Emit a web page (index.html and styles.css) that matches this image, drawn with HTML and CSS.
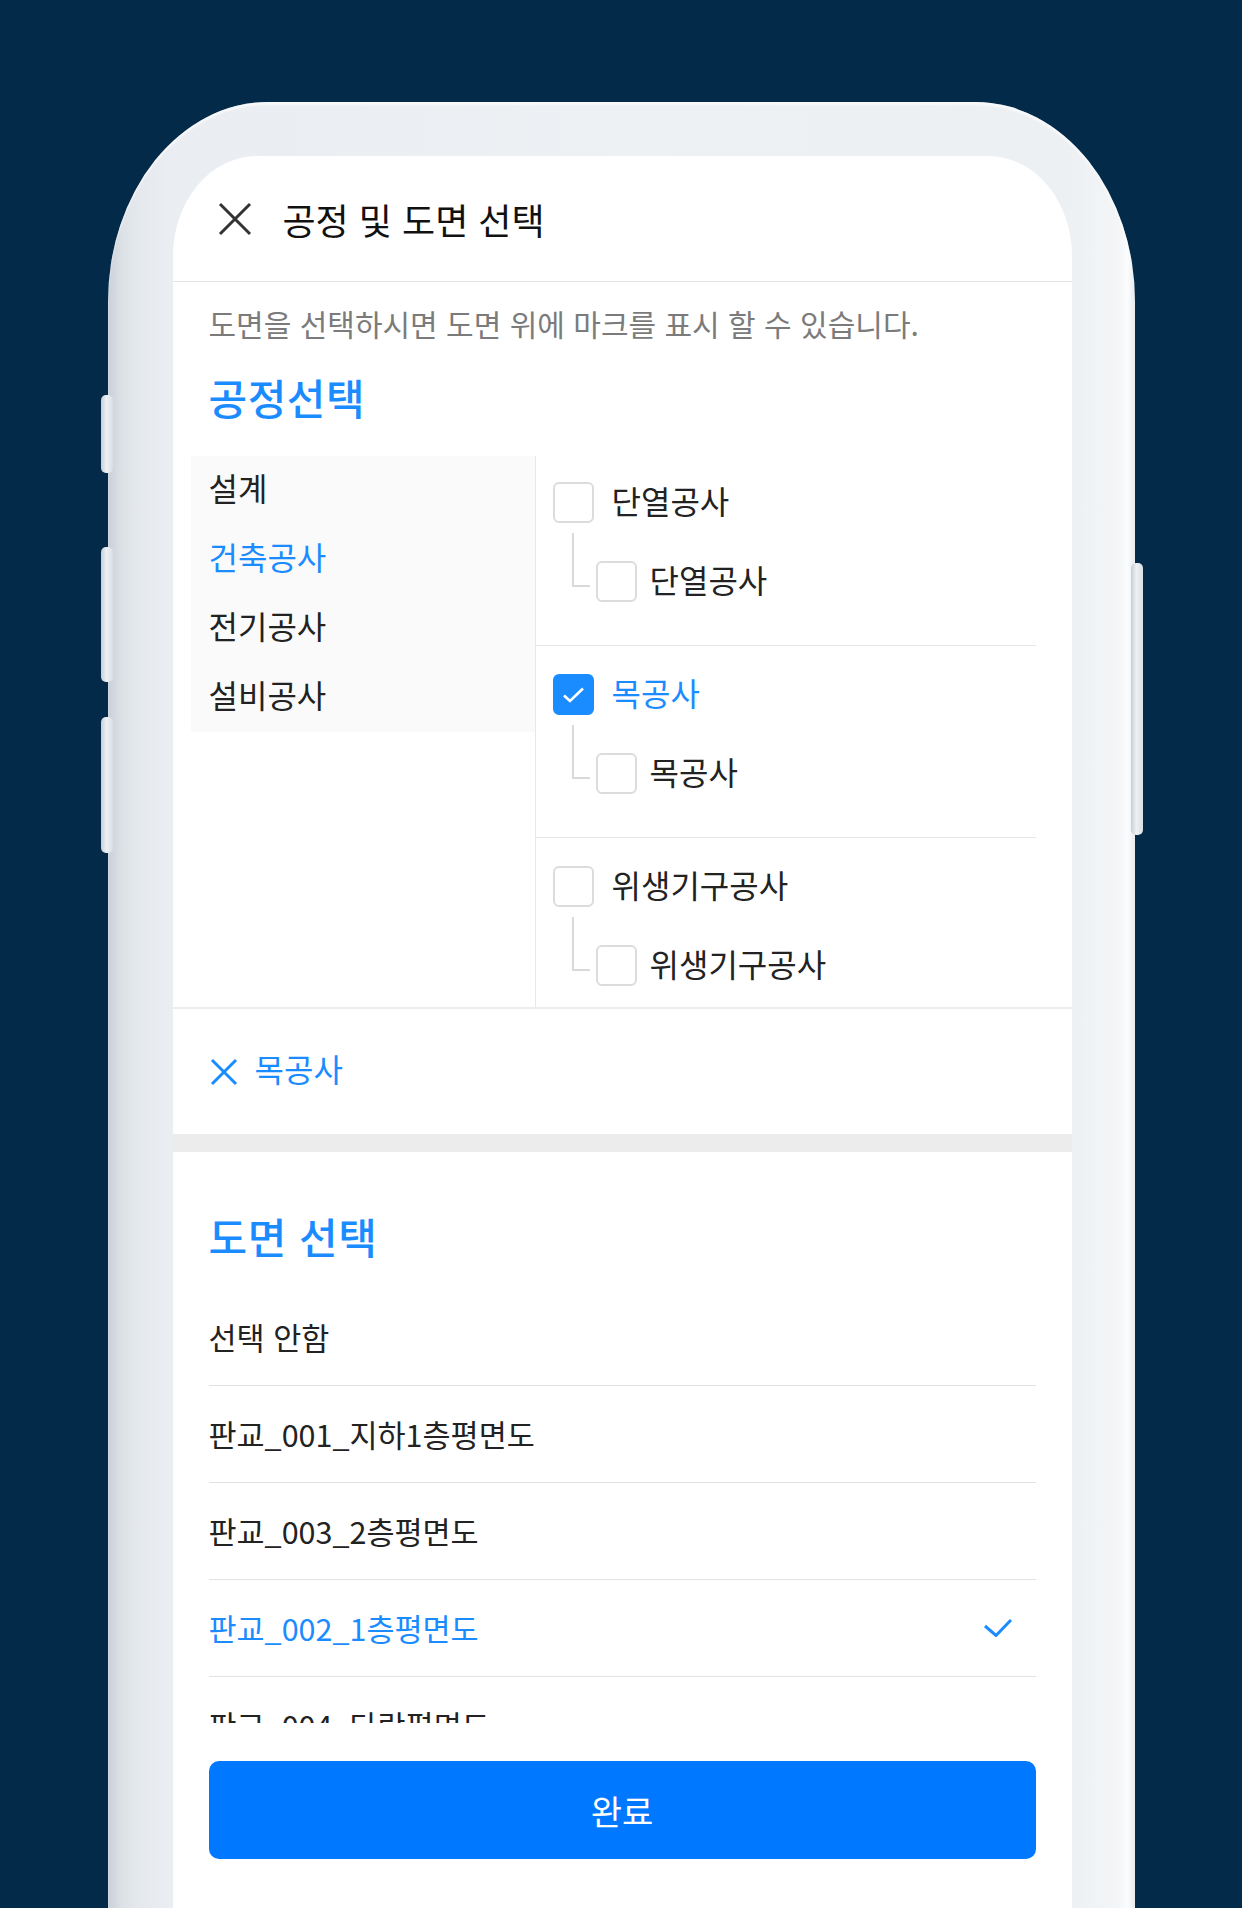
FILE: index.html
```html
<!DOCTYPE html>
<html lang="ko">
<head>
    <meta charset="UTF-8">
    <meta name="viewport" content="width=device-width, initial-scale=1.0">
    <title>공정 및 도면 선택</title>
<link rel="stylesheet" href="styles.css">
</head>
<body>
<div class="stage">
<div class="phone">
    <span class="side-btn mute"></span>
    <span class="side-btn vol-up"></span>
    <span class="side-btn vol-down"></span>
    <span class="side-btn power"></span>

    <div class="screen">
        <header class="top-bar">
            <svg class="close-icon" width="34" height="34" viewBox="0 0 34 34"><path d="M2 2L32 32M32 2L2 32" stroke="#333" stroke-width="3" fill="none"/></svg>
            <h1 class="top-title">공정 및 도면 선택</h1>
        </header>

        <div class="intro">
            <p class="hint">도면을 선택하시면 도면 위에 마크를 표시 할 수 있습니다.</p>
            <h2 class="section-title">공정선택</h2>
        </div>

        <div class="tree">
            <ul class="cats">
                <li>설계</li>
                <li class="active">건축공사</li>
                <li>전기공사</li>
                <li>설비공사</li>
            </ul>

            <div class="groups">
                <div class="group first">
                    <label class="row"><span class="box"></span><span class="txt">단열공사</span></label>
                    <label class="row sub"><span class="box"></span><span class="txt">단열공사</span></label>
                </div>
                <div class="group">
                    <label class="row on">
                        <span class="box checked"><svg width="21" height="16" viewBox="0 0 21 16"><polyline points="1,8.5 7,14 20,1.5" fill="none" stroke="#fff" stroke-width="2.6"/></svg></span>
                        <span class="txt">목공사</span>
                    </label>
                    <label class="row sub"><span class="box"></span><span class="txt">목공사</span></label>
                </div>
                <div class="group">
                    <label class="row"><span class="box"></span><span class="txt">위생기구공사</span></label>
                    <label class="row sub"><span class="box"></span><span class="txt">위생기구공사</span></label>
                </div>
            </div>
        </div>

        <div class="chips">
            <span class="chip">
                <svg width="28" height="28" viewBox="0 0 28 28"><path d="M2 2L26 26M26 2L2 26" stroke="#1b8cff" stroke-width="3" fill="none"/></svg>
                <span class="txt">목공사</span>
            </span>
        </div>

        <div class="gap-band"></div>

        <div class="drawings">
            <h2 class="section-title">도면 선택</h2>
            <ul class="draw-list">
                <li>선택 안함</li>
                <li>판교_001_지하1층평면도</li>
                <li>판교_003_2층평면도</li>
                <li class="on">판교_002_1층평면도
                    <svg width="28" height="18" viewBox="0 0 28 18"><polyline points="1,7 12,16.5 27,1" fill="none" stroke="#1b8cff" stroke-width="3"/></svg>
                </li>
                <li>판교_004_다락평면도</li>
            </ul>
            <div class="actions">
                <button type="button" class="done">완료</button>
            </div>
        </div>
    </div>
</div>
</div>
</body>
</html>
```

FILE: styles.css
```css
*{box-sizing: border-box;}

body{
    margin: 0;
    height: 1908px;
    overflow: hidden;
    background-color: #042a4a;
    font-family: "Noto Sans CJK KR", "Noto Sans", sans-serif;
}
.stage{
    height: 1908px;
    padding-top: 102px;
    display: flex;
    justify-content: center;
}

/* phone body */
.phone{
    position: relative;
    width: 1027px;
    height: 1806px;
    padding: 54px 63px 0 65px;
    border-radius: 160px 160px 0 0 / 200px 200px 0 0;
    background: linear-gradient(90deg, #c9d0d8 0, #dde2e7 1.4%, #e5e9ed 3%, #eaedf1 6%, #eef1f4 50%, #edf0f3 93%, #f3f5f7 98.3%, #fbfcfd 99.3%, #e6eaee 100%);
    box-shadow: inset 0 3px 2px rgba(255,255,255,.6);
    display: flex;
    flex-direction: column;
}
.side-btn{
    position: absolute;
    width: 12px;
    border-radius: 5px;
    background: linear-gradient(90deg, #c7cdd4, #eef1f4 45%, #d9dee3);
}
.mute{ left: -7px; top: 293px; height: 78px; }
.vol-up{ left: -7px; top: 445px; height: 135px; }
.vol-down{ left: -7px; top: 615px; height: 136px; }
.power{ right: -8px; top: 461px; height: 272px; }

.screen{
    flex: 1;
    background: #fff;
    border-radius: 84px 84px 0 0 / 100px 100px 0 0;
    overflow: hidden;
}

/* header */
.top-bar{
    height: 126px;
    display: flex;
    align-items: center;
    padding-left: 45px;
    border-bottom: 1px solid #e4e4e4;
}
.close-icon{
    margin-right: 31px;
}
.top-title{
    margin: 0;
    font-size: 36px;
    font-weight: 400;
    color: #111;
}

.intro{
    padding: 21px 36px 31px;
}
.hint{
    margin: 0;
    font-size: 30px;
    line-height: 40px;
    color: #7b7b7b;
}
.section-title{
    margin: 26px 0 0;
    font-size: 42px;
    line-height: 56px;
    font-weight: 500;
    letter-spacing: .5px;
    color: #1b8cff;
}

/* process tree */
.tree{
    display: flex;
    height: 553px;
    border-bottom: 2px solid #ececec;
    overflow: hidden;
}
.cats{
    list-style: none;
    margin: 0 0 0 18px;
    padding: 0;
    width: 344px;
    align-self: flex-start;
    background: #fafafa;
}
.cats li{
    height: 69px;
    line-height: 62px;
    padding-left: 18px;
    font-size: 32px;
    color: #222;
}
.cats li.active{
    color: #1b8cff;
}
.groups{
    flex: 1;
    margin-right: 36px;
    border-left: 1px solid #e8e8e8;
}
.group{
    padding: 28px 0 43px;
    border-bottom: 1px solid #e6e6e6;
}
.group.first{
    padding-top: 26px;
}
.row{
    display: flex;
    align-items: center;
    gap: 18px;
    height: 41px;
    padding-left: 17px;
    font-size: 32px;
    color: #222;
}
.row .txt{
    padding-bottom: 5px;
}
.row.on{
    color: #1b8cff;
}
.row.sub{
    position: relative;
    margin-top: 38px;
    padding-left: 60px;
    gap: 13px;
}
.row.sub::before{
    content: "";
    position: absolute;
    left: 36px;
    top: -28px;
    width: 16px;
    height: 52px;
    border-left: 2px solid #d9d9d9;
    border-bottom: 2px solid #d9d9d9;
}
.box{
    width: 41px;
    height: 41px;
    flex-shrink: 0;
    border: 2px solid #dcdcdc;
    border-radius: 6px;
    background: #fff;
}
.box.checked{
    display: flex;
    align-items: center;
    justify-content: center;
    background: #1b8cff;
    border-color: #1b8cff;
}

/* selected chips */
.chips{
    height: 125px;
    display: flex;
    align-items: center;
    padding-left: 37px;
}
.chip{
    display: flex;
    align-items: center;
    gap: 17px;
    font-size: 32px;
    color: #1b8cff;
}
.chip .txt{
    padding-bottom: 7px;
}
.gap-band{
    height: 18px;
    background: #ececec;
}

/* drawings */
.drawings{
    padding: 56px 36px 0;
}
.drawings .section-title{
    margin: 0 0 25px;
}
.draw-list{
    list-style: none;
    margin: 0;
    padding: 0;
    height: 434px;
    overflow: hidden;
}
.draw-list li{
    height: 97px;
    line-height: 96px;
    display: flex;
    align-items: center;
    justify-content: space-between;
    padding-right: 24px;
    border-bottom: 1px solid #e2e2e2;
    font-size: 30.5px;
    color: #222;
}
.draw-list li.on{
    color: #1b8cff;
}
.actions{
    padding-top: 38px;
}
.done{
    width: 100%;
    height: 98px;
    border: 0;
    border-radius: 10px;
    background: #0078ff;
    color: #fff;
    font-family: inherit;
    font-size: 34px;
}
```
